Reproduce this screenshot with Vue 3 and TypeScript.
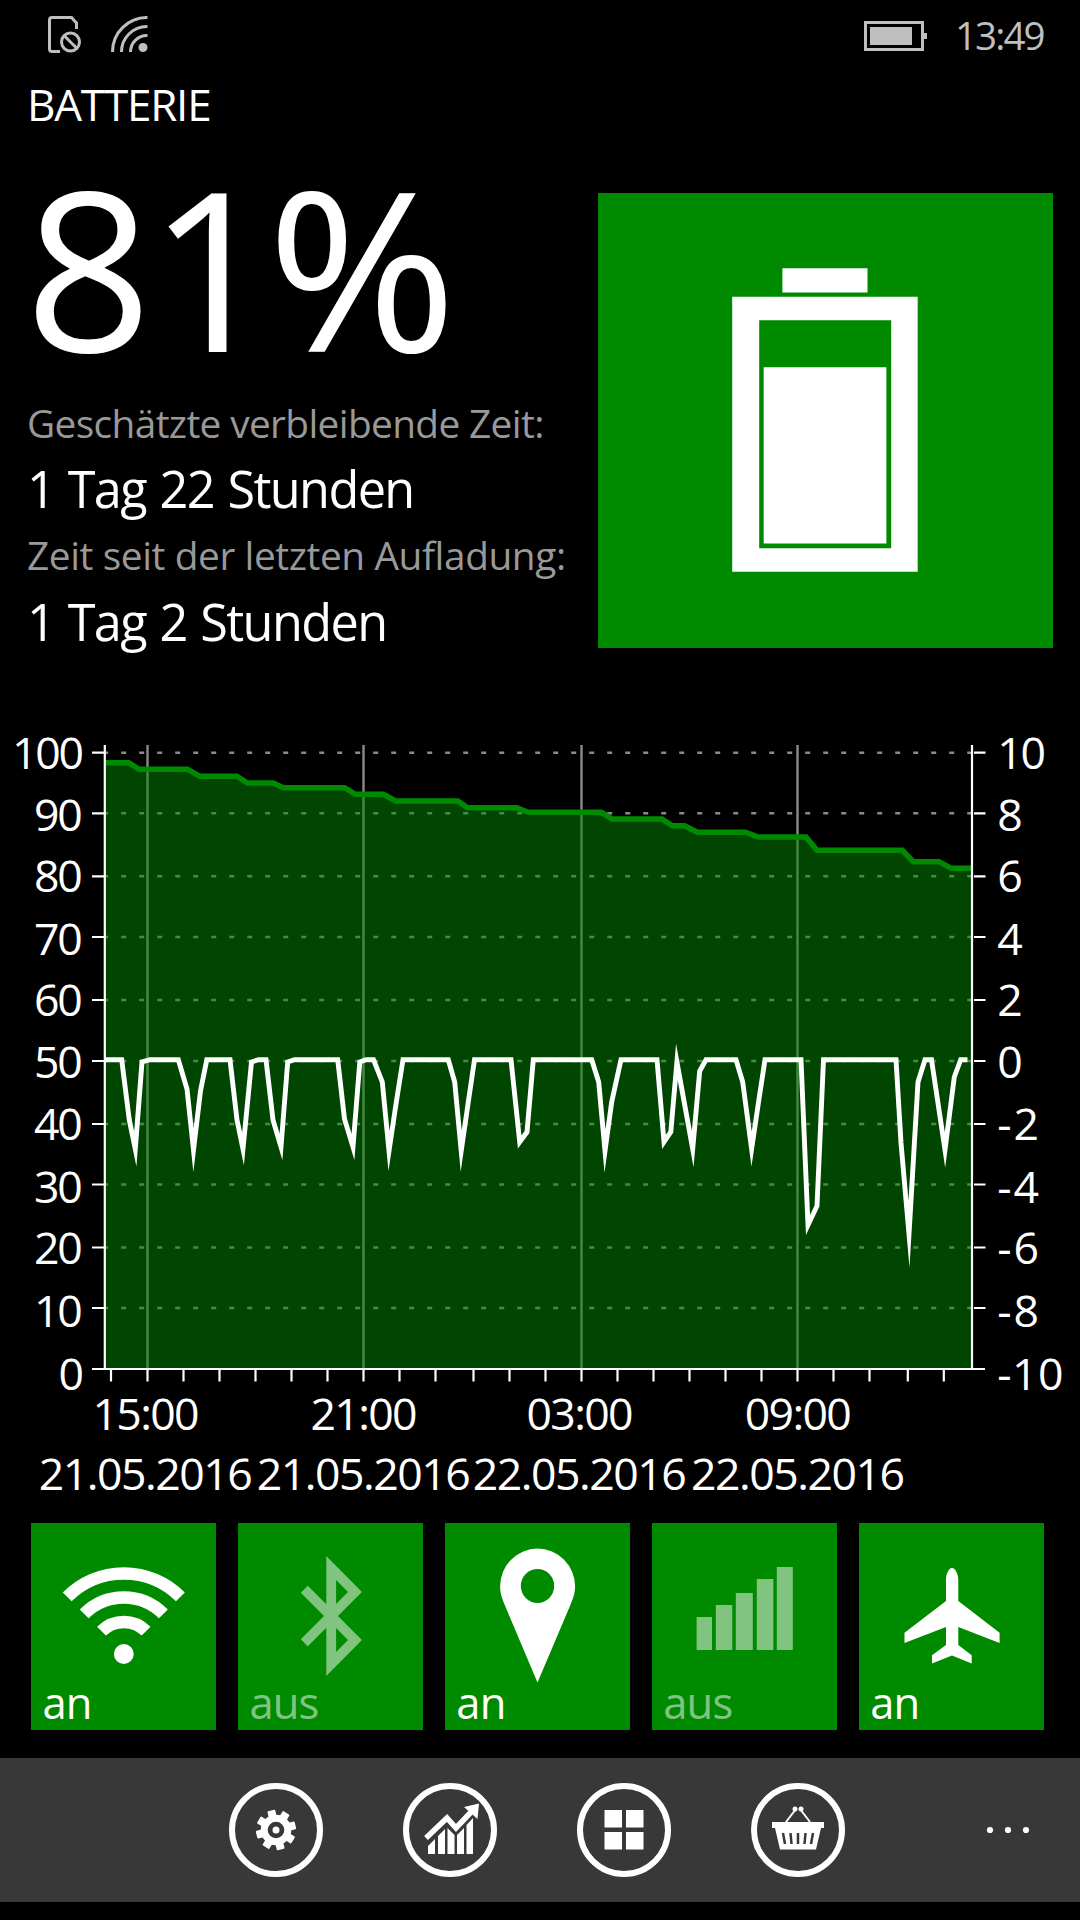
<script setup lang="ts">
interface AxisLabel { text: string; x: number; y: number; width: number }
interface Tile { id: string; on: boolean }

const digit = 24.3
const baselines = [769, 831, 892, 955, 1016, 1078, 1140, 1203, 1264, 1327, 1390]
const gridRows = [752.7, 813.3, 876.3, 937, 1000, 1061, 1124, 1184.5, 1247.5, 1308]
const gridCols = [147.5, 363.5, 581.5, 797.5]

const leftLabels: AxisLabel[] = baselines.map((y, i) => {
  const text = String(100 - i * 10)
  const width = text.length * digit - (i === 0 ? 1 : 0)
  return { text, x: (i === 0 ? 84 : 82.7) - width, y, width }
})
const rightLabels: AxisLabel[] = baselines.map((y, i) => {
  const value = 10 - i * 2
  const digits = String(Math.abs(value)).length
  return { text: String(value), x: 997.3, y, width: digits * digit + (value < 0 ? 17.5 : 0) }
})
const hourTicks = [111, 147.5, 183.5, 219.5, 255.5, 291.5, 327.5, 363.5, 399.5, 435.5, 473.5, 509.5,
  545.5, 581.5, 617.5, 653.5, 689.5, 725.5, 761.5, 797.5, 833.5, 869.5, 907.8, 943.8]
const timeLabels = [
  { x: 146, time: '15:00', date: '21.05.2016' },
  { x: 364, time: '21:00', date: '21.05.2016' },
  { x: 580, time: '03:00', date: '22.05.2016' },
  { x: 798.3, time: '09:00', date: '22.05.2016' },
]

const level: number[][] = [
  [105, 762.7], [128.7, 762.7], [139, 769.3], [187.7, 769.3], [199.7, 776.3], [237, 776.3], [247.3, 783],
  [273.3, 783], [283.3, 787.7], [344.7, 787.7], [355.3, 794.3], [383.3, 794.3], [395.7, 801], [457.7, 801],
  [467.7, 807.7], [516.7, 807.7], [528.3, 812.3], [601.3, 812.3], [612, 819], [662, 819], [672.3, 825.7],
  [684.7, 825.7], [697.3, 832.3], [745.7, 832.3], [758, 837], [806, 837], [817, 850.3], [902.3, 850.3],
  [913.3, 861.7], [939, 861.7], [951.3, 868.3], [971, 868.3],
]
const change: number[][] = [
  [105, 1059.7], [121.7, 1059.7], [129.3, 1120], [135.3, 1149], [142, 1062], [150, 1059.7], [178.3, 1059.7],
  [187, 1089], [193.5, 1150], [200.5, 1091], [206.8, 1059.7], [230, 1059.7], [237, 1120], [243, 1149],
  [251.5, 1062], [258.5, 1059.7], [266, 1059.7], [273, 1120], [281, 1147], [287.7, 1062], [294.5, 1059.7],
  [337.7, 1059.7], [344.5, 1119], [353, 1147], [359.8, 1062], [366, 1059.7], [373.5, 1059.7], [382.3, 1082],
  [389, 1151], [396, 1104], [403, 1059.7], [448.3, 1059.7], [454.7, 1082], [461.2, 1151], [468, 1104],
  [474.5, 1059.7], [511, 1059.7], [519.7, 1142], [527, 1132], [533.3, 1059.7], [591.7, 1059.7], [598.7, 1082],
  [605, 1151], [611.7, 1102], [621, 1059.7], [657, 1059.7], [664, 1142], [670.8, 1132], [676.9, 1062],
  [692.7, 1149], [699.7, 1071], [706, 1059.7], [736, 1059.7], [742.7, 1082], [751.6, 1149], [759, 1099],
  [765, 1059.7], [801, 1059.7], [808, 1225], [817, 1206], [823.5, 1059.7], [896, 1059.7], [901, 1143],
  [909, 1234], [918, 1082], [925, 1059.7], [931.5, 1059.7], [945, 1150], [954.3, 1077], [960.7, 1059.7], [967.5, 1059.7],
]
const join = (pts: number[][]) => pts.map(p => p.join(',')).join(' ')
const levelPoints = join(level)
const areaPoints = `105,1369 ${levelPoints} 971,1369`
const changePoints = join(change)

const tiles: Tile[] = [
  { id: 'wifi', on: true },
  { id: 'bluetooth', on: false },
  { id: 'location', on: true },
  { id: 'cellular', on: false },
  { id: 'airplane', on: true },
]
const gearTeeth = Array.from({ length: 8 }, (_, i) => i * 45 - 14)
</script>

<template>
  <main class="screen">
    <header class="status">
      <svg class="sim" width="34" height="38" viewBox="0 0 34 38" fill="none" stroke="#bfbfbf" stroke-width="3">
        <path d="M12 35.500H4Q1.500 35.500 1.500 33V4Q1.500 1.500 4 1.500H23.500L28.500 7V13" />
        <circle cx="22.500" cy="26" r="9" />
        <path d="M16 19.500L29 32.500" />
      </svg>
      <svg class="signal" width="37" height="36" viewBox="0 0 37 36" fill="none" stroke="#bfbfbf" stroke-width="3">
        <path d="M1.500 36A34.500 34.500 0 0 1 36.500 1.500M10.500 36A25.500 25.500 0 0 1 36.500 10.500M19.500 36A16.500 16.500 0 0 1 36.500 19.500" />
        <circle cx="32" cy="31.500" r="4.500" fill="#bfbfbf" stroke="none" />
      </svg>
      <span class="grow"></span>
      <svg class="charge" width="63" height="30" viewBox="0 0 63 30">
        <path d="M1.500 1.500H58.500V28.500H1.500Z" fill="none" stroke="#bfbfbf" stroke-width="3" />
        <path d="M6 6H48V24H6ZM60 12H63V18H60Z" fill="#bfbfbf" />
      </svg>
      <span class="clock">13:49</span>
    </header>

    <h1 class="title">BATTERIE</h1>

    <section class="summary">
      <div class="facts">
        <div class="percent">81<span class="unit">%</span></div>
        <div class="caption">Geschätzte verbleibende Zeit:</div>
        <div class="value">1 Tag 22 Stunden</div>
        <div class="caption wide">Zeit seit der letzten Aufladung:</div>
        <div class="value">1 Tag 2 Stunden</div>
      </div>
      <svg class="gauge" width="454.700" height="454.700" viewBox="598.300 193.300 454.700 454.700">
        <path fill="#fff" fill-rule="evenodd"
          d="M782.700 268.500H867.800V292.700H782.700ZM732.500 297H918V572H732.500ZM759.500 320.500V548.500H891.500V320.500ZM764 367.500H886.700V543.700H764Z" />
      </svg>
    </section>

    <svg class="chart" width="1080" height="800" viewBox="0 710 1080 800">
      <g stroke="#8a8a8a" stroke-width="2.400">
        <path v-for="y in gridRows" :key="y" :d="`M105 ${y}H972`" stroke-dasharray="5 13" stroke-dashoffset="1.800" />
        <path v-for="x in gridCols" :key="x" :d="`M${x} 745V1369`" stroke-width="2.400" />
      </g>
      <polygon :points="areaPoints" fill="#008a00" fill-opacity=".5" />
      <polyline :points="levelPoints" fill="none" stroke="#008a00" stroke-width="5.500" />
      <polyline :points="changePoints" fill="none" stroke="#fff" stroke-width="4.900" stroke-miterlimit="20" />
      <g stroke="#fff" stroke-width="2.200">
        <path d="M104.800 745V1370M972 745V1370M92 1369H985" />
        <path v-for="y in gridRows" :key="y" :d="`M92 ${y}H104M974 ${y}H985.500`" />
        <path v-for="x in hourTicks" :key="x" :d="`M${x} 1370V1381.500`" />
      </g>
      <g class="axis" fill="#fff">
        <text v-for="l in leftLabels" :key="l.text" :x="l.x" :y="l.y" :textLength="l.width">{{ l.text }}</text>
        <text v-for="l in rightLabels" :key="l.text" :x="l.x" :y="l.y" :textLength="l.width">{{ l.text }}</text>
        <template v-for="t in timeLabels" :key="t.x">
          <text :x="t.x - 53.500" y="1430" textLength="107">{{ t.time }}</text>
          <text :x="t.x - 107.200" y="1490" textLength="214">{{ t.date }}</text>
        </template>
      </g>
    </svg>

    <section class="tiles">
      <div v-for="t in tiles" :key="t.id" class="tile" :class="{ off: !t.on }">
        <svg v-if="t.id === 'wifi'" class="glyph" viewBox="31.200 1523 184.800 147">
          <path fill="none" stroke="#fff" stroke-width="12.500"
            d="M67.400 1596.900A80 80 0 0 1 180.600 1596.900M84.400 1613.900A56 56 0 0 1 163.600 1613.900M101.700 1631.200A31.500 31.500 0 0 1 146.300 1631.200" />
          <circle cx="124" cy="1654" r="9.900" fill="#fff" />
        </svg>
        <svg v-else-if="t.id === 'bluetooth'" class="glyph" viewBox="238.200 1523 184.800 160">
          <path fill="none" stroke="#fff" stroke-width="9.800" stroke-miterlimit="10"
            d="M304.500 1589.200L355.200 1640L331.400 1664V1568L355.200 1592L304.500 1642.800" />
        </svg>
        <svg v-else-if="t.id === 'location'" class="glyph" viewBox="445.200 1523 184.800 165">
          <path fill="#fff" fill-rule="evenodd"
            d="M537.700 1682.500L504.500 1604C501.500 1596 500.300 1592 500.300 1586.500A37.500 38 0 0 1 575.300 1586.500C575.300 1592 574 1597 571 1604ZM537.700 1569A16.700 17 0 1 0 537.700 1603A16.700 17 0 1 0 537.700 1569Z" />
        </svg>
        <svg v-else-if="t.id === 'cellular'" class="glyph" viewBox="652.200 1523 184.800 147">
          <path fill="#fff"
            d="M696.800 1617H712.200V1650H696.800ZM716 1605H732.500V1650H716ZM736 1593H753V1650H736ZM757 1579H773.600V1650H757ZM777 1567H793V1650H777Z" />
        </svg>
        <svg v-else class="glyph" viewBox="859.200 1523 184.800 147">
          <path fill="#fff"
            d="M952.200 1568C955.500 1568 958.500 1574 958.500 1580V1601L999.800 1632.700V1643L958.500 1627V1645L971.900 1655.300V1663.500L952.200 1655.500L932.200 1663.500V1655.300L946.200 1645V1627L904.700 1643V1632.700L946.200 1601V1580C946.200 1574 949 1568 952.200 1568Z" />
        </svg>
        <span class="state">{{ t.on ? 'an' : 'aus' }}</span>
      </div>
    </section>

    <footer class="appbar">
      <button class="round" aria-label="Einstellungen">
        <svg width="82" height="82" viewBox="-41 -41 82 82">
          <g fill="#fff">
            <rect v-for="a in gearTeeth" :key="a" x="-4" y="-20" width="8" height="8" rx="1" :transform="`rotate(${a})`" />
          </g>
          <circle r="11.800" fill="none" stroke="#fff" stroke-width="7" />
          <circle r="3.500" fill="#fff" />
        </svg>
      </button>
      <button class="round" aria-label="Statistik">
        <svg width="82" height="82" viewBox="-41 -41 82 82">
          <path fill="none" stroke="#fff" stroke-width="5.500" d="M-24 8L-3 -12L6 -2L23 -20" />
          <path fill="#fff" d="M14 -23L29 -26.500L27.500 -11Z" />
          <path fill="#fff" d="M-22 16L-15 9V24H-22ZM-12 6L-5 -1V24H-12ZM-2.500 -2L4.500 5V24H-2.500ZM7 5L14 -2V24H7ZM16.500 -5L23 -12V24H16.500Z" />
        </svg>
      </button>
      <button class="round" aria-label="Kacheln">
        <svg width="82" height="82" viewBox="-41 -41 82 82">
          <path fill="#fff" d="M-19.500 -20H-2V-2.500H-19.500ZM2 -20H19.500V-2.500H2ZM-19.500 2H-2V19.500H-19.500ZM2 2H19.500V19.500H2Z" />
        </svg>
      </button>
      <button class="round" aria-label="Store">
        <svg width="82" height="82" viewBox="-41 -41 82 82">
          <path fill="none" stroke="#fff" stroke-width="2" d="M-12 -8L-2 -21M12 -8L2 -21" />
          <circle cx="-3" cy="-21" r="2.500" fill="#fff" /><circle cx="3" cy="-21" r="2.500" fill="#fff" />
          <path fill="#fff" d="M-26 -8H26V-2H23L18 19.500H-18L-23 -2H-26Z" />
          <path stroke="#383838" stroke-width="2.500" d="M-15 3L-13 14M-7.500 3L-6.500 14M0 3V14M7.500 3L6.500 14M15 3L13 14" />
        </svg>
      </button>
      <svg class="more" width="44" height="8" viewBox="0 0 44 8" fill="#fff">
        <circle cx="4" cy="4" r="3.100" /><circle cx="22" cy="4" r="3.100" /><circle cx="40" cy="4" r="3.100" />
      </svg>
    </footer>
  </main>
</template>

<style>
body { margin: 0; background: #000; }
</style>

<style scoped>
.screen {
  width: 1080px;
  height: 1920px;
  display: flex;
  flex-direction: column;
  background: #000;
  color: #fff;
  overflow: hidden;
  font-family: "Open Sans", "Noto Sans", sans-serif;
  white-space: nowrap;
}
.grow { flex: 1; }
.status {
  height: 74px;
  display: flex;
  align-items: flex-start;
  padding: 0 37px 0 48px;
  box-sizing: border-box;
  color: #bfbfbf;
}
.sim { margin-top: 16px; }
.signal { margin: 16px 0 0 29px; }
.charge { margin-top: 21px; }
.clock {
  width: 88px;
  margin: 11px 0 0 28px;
  font-size: 38.500px;
  line-height: 48px;
  font-weight: 400;
  letter-spacing: -1.900px;
}
.title {
  margin: 0;
  padding-left: 27px;
  height: 60px;
  line-height: 60px;
  font-size: 44px;
  font-weight: 400;
  letter-spacing: -1.200px;
}
.summary {
  height: 576px;
  display: flex;
  justify-content: space-between;
  padding: 0 27px 0 27px;
}
.facts { padding-top: 20px; }
.percent {
  height: 225px;
  line-height: 225px;
  margin: 0 0 17px -2px;
  font-size: 222px;
  letter-spacing: -3.400px;
}
.unit {
  display: inline-block;
  margin-left: -5px;
  transform: scaleX(1.035);
  transform-origin: 0 50%;
}
.caption {
  height: 54px;
  line-height: 54px;
  font-size: 38.800px;
  color: #999;
  letter-spacing: -.63px;
}
.caption.wide {
  margin: -1px 0 1px;
  letter-spacing: -.4px;
}
.value {
  height: 78.500px;
  line-height: 78.500px;
  font-size: 50.400px;
  letter-spacing: -1.600px;
  word-spacing: 2px;
}
.gauge { margin-top: 59.300px; background: #008a00; }
.chart { display: block; flex: none; }
.axis {
  font-size: 44.600px;
}
.tiles {
  display: flex;
  gap: 22.200px;
  padding: 13px 0 0 31.400px;
}
.tile {
  width: 184.800px;
  height: 207px;
  background: #008a00;
  display: grid;
  grid-template-rows: 207px;
}
.glyph { grid-area: 1 / 1; width: 184.800px; }
.state {
  grid-area: 1 / 1;
  align-self: end;
  padding-left: 11px;
  height: 57px;
  line-height: 60px;
  font-size: 43.500px;
  letter-spacing: -.9px;
}
.tile.off .glyph, .tile.off .state { opacity: .5; }
.appbar {
  margin-top: 28px;
  height: 144px;
  display: flex;
  align-items: center;
  gap: 80px;
  padding: 0 50px 0 229px;
  box-sizing: border-box;
  background: #383838;
}
.round {
  flex: none;
  width: 94px;
  height: 94px;
  padding: 0;
  border: 6px solid #fff;
  border-radius: 50%;
  background: none;
}
.round svg { display: block; }
.more { flex: none; margin-left: auto; }
</style>
